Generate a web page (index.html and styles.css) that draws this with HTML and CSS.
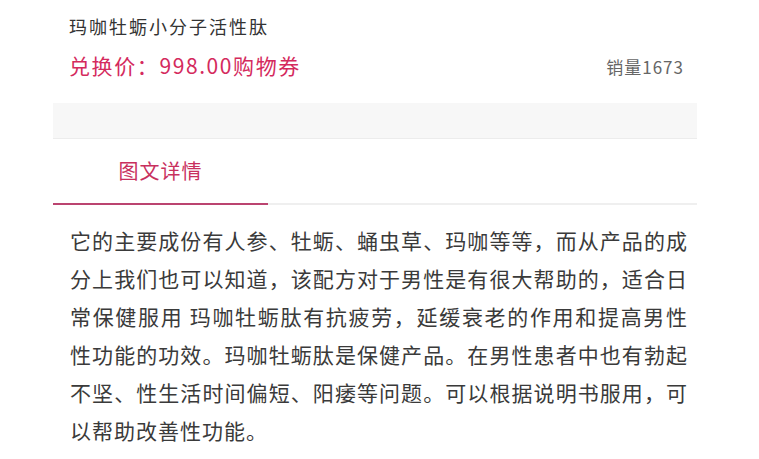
FILE: index.html
```html
<!DOCTYPE html>
<html lang="zh-CN">
<head>
<meta charset="utf-8">
<link rel="stylesheet" href="styles.css">
</head>
<body>
<div class="page">
  <div class="header">
    <div class="title">玛咖牡蛎小分子活性肽</div>
    <div class="price-row">
      <div class="price">兑换价：998.00购物券</div>
      <div class="sales">销量1673</div>
    </div>
  </div>
  <div class="band"></div>
  <div class="tabs">
    <div class="tab active">图文详情</div>
  </div>
  <div class="content">它的主要成份有人参、牡蛎、蛹虫草、玛咖等等，而从产品的成分上我们也可以知道，该配方对于男性是有很大帮助的，适合日常保健服用 玛咖牡蛎肽有抗疲劳，延缓衰老的作用和提高男性性功能的功效。玛咖牡蛎肽是保健产品。在男性患者中也有勃起不坚、性生活时间偏短、阳痿等问题。可以根据说明书服用，可以帮助改善性功能。</div>
</div>
</body>
</html>
```
FILE: styles.css
```css
html, body {
  margin: 0;
  padding: 0;
  background: #ffffff;
}
body {
  font-family: "Noto Sans CJK SC", "Noto Sans", sans-serif;
  color: #333333;
}
.page {
  width: 644px;
  margin-left: 53px;
}
.header {
  padding: 14px 13px 23px 16px;
}
.title {
  font-size: 18px;
  line-height: 24px;
  letter-spacing: 2px;
  color: #333333;
}
.price-row {
  margin-top: 12px;
  height: 30px;
  display: flex;
  justify-content: space-between;
  align-items: center;
}
.price {
  font-size: 21px;
  letter-spacing: 1.6px;
  color: #d42a5d;
}
.sales {
  font-size: 17px;
  letter-spacing: 1px;
  color: #666666;
  padding-top: 2px;
}
.band {
  height: 35px;
  background: #f7f7f7;
  border-bottom: 1px solid #ececec;
}
.tabs {
  display: flex;
  border-bottom: 2px solid #efefef;
}
.tab {
  width: 215px;
  height: 64px;
  line-height: 64px;
  text-align: center;
  font-size: 20px;
  letter-spacing: 1px;
  color: #c8305e;
  margin-bottom: -2px;
  border-bottom: 2px solid transparent;
}
.tab.active {
  border-bottom-color: #bb4470;
}
.content {
  padding: 16px 9px 0 17px;
  font-size: 21px;
  line-height: 38px;
  letter-spacing: 1px;
  color: #3a3a3a;
  text-align: justify;
}
```
